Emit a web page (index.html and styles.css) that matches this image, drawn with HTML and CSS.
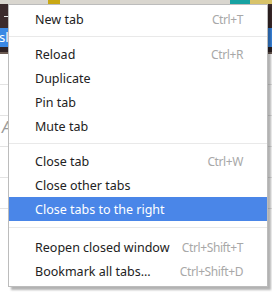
FILE: index.html
```html
<!DOCTYPE html>
<html lang="en">
<head>
    <meta charset="UTF-8">
    <meta name="viewport" content="width=device-width, initial-scale=1.0">
    <title>Tab Menu</title>
    <link rel="stylesheet" href="styles.css">
</head>
<body>
    <div class="page">
        <div class="tabstrip">
            <span class="seg seg-grey"></span>
            <span class="seg seg-gold"></span>
            <span class="seg seg-grey wide"></span>
            <span class="seg seg-teal"></span>
            <span class="seg seg-gold2"></span>
        </div>
        <div class="toolbar"><span class="dash"></span></div>
        <div class="bookmarks"><span class="bm-text">sl</span></div>
        <div class="rule"></div>
        <div class="content">
            <div class="row"></div>
            <div class="row"></div>
            <div class="row"><span class="italic">A</span></div>
            <div class="row"></div>
            <div class="row"></div>
        </div>
    </div>

    <div class="menu">
        <div class="item"><span>New tab</span><span class="key">Ctrl+T</span></div>
        <div class="sep"></div>
        <div class="item"><span>Reload</span><span class="key">Ctrl+R</span></div>
        <div class="item"><span>Duplicate</span></div>
        <div class="item"><span>Pin tab</span></div>
        <div class="item"><span>Mute tab</span></div>
        <div class="sep"></div>
        <div class="item"><span>Close tab</span><span class="key">Ctrl+W</span></div>
        <div class="item"><span>Close other tabs</span></div>
        <div class="item active"><span>Close tabs to the right</span></div>
        <div class="sep sep-wide"></div>
        <div class="item"><span>Reopen closed window</span><span class="key">Ctrl+Shift+T</span></div>
        <div class="item"><span>Bookmark all tabs...</span><span class="key">Ctrl+Shift+D</span></div>
    </div>
</body>
</html>
```

FILE: styles.css
```css
body {
    margin: 0;
    font-family: "Noto Sans", "Open Sans", sans-serif;
    background: #f2f2f2;
    width: 272px;
    height: 294px;
    overflow: hidden;
    position: relative;
}

.page {
    display: flex;
    flex-direction: column;
    height: 294px;
}

.tabstrip {
    display: flex;
    height: 4px;
}

.seg {
    height: 4px;
    width: 48px;
}

.seg.wide {
    width: 170px;
}

.seg-grey {
    background: #d9d6cf;
}

.seg-gold {
    background: #c9a814;
    width: 12px;
}

.seg-teal {
    background: #17a2a2;
    width: 20px;
}

.seg-gold2 {
    background: #d8c36a;
    flex: 1;
}

.toolbar {
    height: 24px;
    background: #3b2a2c;
    display: flex;
    align-items: center;
}

.dash {
    width: 5px;
    height: 1px;
    background: #e6e6e6;
    margin-left: 4px;
}

.bookmarks {
    height: 19px;
    background: #3a88e4;
    color: #ffffff;
    font-size: 13px;
    line-height: 19px;
}

.bm-text {
    margin-left: -1px;
}

.rule {
    height: 5px;
    background: #2e2224;
    border-bottom: 2px solid #6b5a52;
}

.content {
    flex: 1;
    background: #ffffff;
    display: flex;
    flex-direction: column;
}

.row {
    height: 30px;
    border-bottom: 1px solid #e3e3e3;
}

.italic {
    font-style: italic;
    color: #9a9a9a;
    font-size: 16px;
    margin-left: 2px;
}

.menu {
    position: absolute;
    left: 8px;
    top: 4px;
    width: 258px;
    background: #ffffff;
    border: 1px solid #bcbcbc;
    box-shadow: 3px 3px 2px rgba(0, 0, 0, 0.3);
    padding: 2px 0 3px;
    font-size: 12.5px;
    color: #222222;
}

.item {
    height: 24px;
    display: flex;
    justify-content: space-between;
    align-items: center;
    padding: 0 24px 0 26px;
}

.item .key {
    color: #a8a8a8;
    font-size: 12px;
    letter-spacing: -0.4px;
}

.item.active {
    background: #4a86e8;
    color: #ffffff;
}

.sep {
    height: 1px;
    background: #e9e9e9;
    margin: 5px 0 5px;
}

.sep.sep-wide {
    margin: 6px 0 7px;
}
```
